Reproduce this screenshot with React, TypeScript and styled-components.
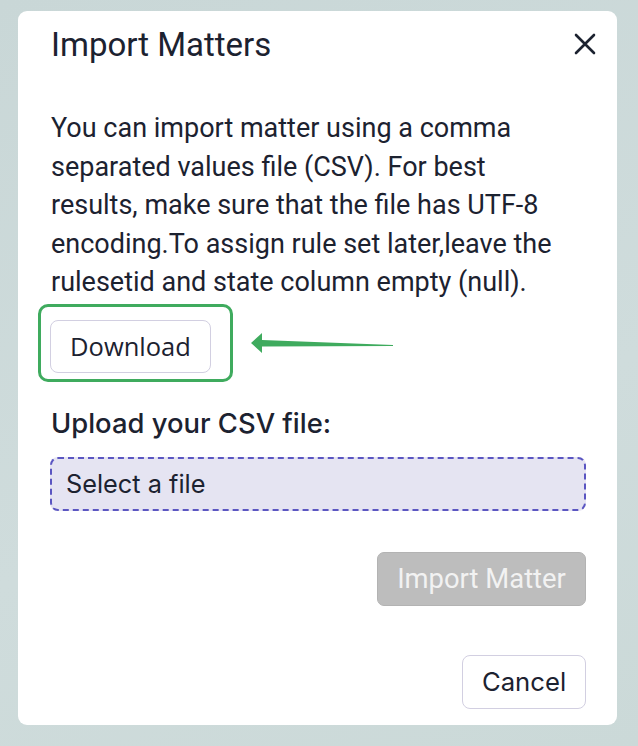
import React from "react";
import styled, { createGlobalStyle } from "styled-components";

const Global = createGlobalStyle`
  html, body { margin: 0; padding: 0; }
  body {
    width: 638px;
    height: 746px;
    overflow: hidden;
    background: linear-gradient(160deg, #c9d7d7 0%, #cfdcdc 60%, #cbd9d8 100%);
    font-family: "Roboto", "Liberation Sans", sans-serif;
  }
`;

const Page = styled.div`
  padding: 11px 21px 0 18px;
`;

const Modal = styled.div`
  background: #ffffff;
  border-radius: 9px;
  width: 599px;
  box-sizing: border-box;
  padding: 0 31px 16px 32px;
  display: flex;
  flex-direction: column;
  color: #1c2230;
`;

const Header = styled.div`
  display: flex;
  flex-shrink: 0;
  align-items: center;
  justify-content: space-between;
  height: 66px;
  padding-left: 1px;
`;

const Title = styled.h2`
  margin: 0;
  font-family: "Roboto", sans-serif;
  font-weight: 400;
  font-size: 33px;
  color: #1c2230;
`;

const CloseBtn = styled.button`
  border: none;
  background: none;
  padding: 0;
  width: 24px;
  height: 24px;
  display: flex;
  align-items: center;
  justify-content: center;
  margin-right: -11px;
  color: #1c2230;
`;

const Body = styled.div`
  padding-top: 32px;
  padding-left: 1px;
`;

const Text = styled.p`
  margin: 0;
  padding-right: 20px;
  font-family: "Roboto", sans-serif;
  font-size: 27px;
  line-height: 38.5px;
  color: #1c2230;
`;

const DownloadRow = styled.div`
  display: flex;
  align-items: center;
  margin-top: 2px;
  margin-left: -13px;
`;

const Highlight = styled.div`
  border: 3px solid #3fab5e;
  border-radius: 10px;
  padding: 13px 0 6px 9px;
  width: 195px;
  height: 78px;
  box-sizing: border-box;
`;

const OutlineButton = styled.button`
  font-family: "Open Sans", "Noto Sans", sans-serif;
  font-size: 25.5px;
  color: #1c2230;
  background: #fff;
  border: 1.5px solid #d2cfe1;
  border-radius: 8px;
  height: 53px;
  width: 161px;
  padding: 0;
  box-sizing: border-box;
  cursor: pointer;
`;

const Arrow = styled.svg`
  margin-left: 18px;
`;

const Label = styled.div`
  margin-top: 25px;
  font-family: "Inter", sans-serif;
  font-weight: 500;
  font-size: 27.4px;
  line-height: 32px;
  color: #1c2230;
`;

const FileInput = styled.div`
  margin-top: 18px;
  margin-left: -1px;
  height: 54px;
  box-sizing: border-box;
  border: 2px dashed #5b56c2;
  border-radius: 8px;
  background: #e5e4f2;
  display: flex;
  align-items: center;
  padding-left: 14px;
  font-family: "Inter", sans-serif;
  font-size: 25.3px;
  color: #1c2230;
`;

const Actions = styled.div<{ $gap: number }>`
  display: flex;
  justify-content: flex-end;
  margin-top: ${(p) => p.$gap}px;
`;

const DisabledButton = styled.button`
  font-family: "Roboto", sans-serif;
  font-size: 27.4px;
  color: #f2f2f2;
  background: #bdbdbd;
  border: 1.5px solid #b3b3b3;
  border-radius: 7px;
  height: 54px;
  width: 209px;
  padding: 0;
  box-sizing: border-box;
`;

const CancelButton = styled(OutlineButton)`
  font-family: "Inter", sans-serif;
  font-size: 25.7px;
  width: 124px;
  height: 54px;
`;

export default function App() {
  return (
    <>
      <Global />
      <Page>
        <Modal>
          <Header>
            <Title>Import Matters</Title>
            <CloseBtn aria-label="close">
              <svg width="22" height="22" viewBox="0 0 22 22">
                <path d="M2 2 L20 20 M20 2 L2 20" stroke="#1c2230" strokeWidth="2.6" strokeLinecap="round" />
              </svg>
            </CloseBtn>
          </Header>
          <Body>
            <Text>
              You can import matter using a comma separated values file (CSV). For best results, make sure that the file has UTF-8 encoding.To assign rule set later,leave the rulesetid and state column empty (null).
            </Text>
            <DownloadRow>
              <Highlight>
                <OutlineButton>Download</OutlineButton>
              </Highlight>
              <Arrow width="144" height="20" viewBox="0 0 144 20">
                <path d="M0 10 L11 0 L11 7 L142 12 L142 13 L11 13.5 L11 20 Z" fill="#3fab5e" />
              </Arrow>
            </DownloadRow>
            <Label>Upload your CSV file:</Label>
            <FileInput>Select a file</FileInput>
            <Actions $gap={41}>
              <DisabledButton disabled>Import Matter</DisabledButton>
            </Actions>
            <Actions $gap={49}>
              <CancelButton>Cancel</CancelButton>
            </Actions>
          </Body>
        </Modal>
      </Page>
    </>
  );
}
